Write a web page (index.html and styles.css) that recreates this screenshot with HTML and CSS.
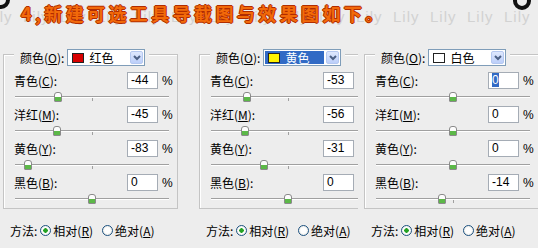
FILE: index.html
```html
<!DOCTYPE html>
<html lang="zh-CN">
<head>
    <meta charset="UTF-8">
    <title>可选颜色</title>
    <link rel="stylesheet" href="styles.css">
</head>
<body>

    <div class="banner">
        <div class="watermark">
            <span>Lily</span><span>Lily</span><span>Lily</span><span>Lily</span><span>Lily</span><span>Lily</span><span>Lily</span><span>Lily</span><span>Lily</span><span>Lily</span><span>Lily</span><span>Lily</span><span>Lily</span><span>Lily</span><span>Lily</span><span>Lily</span>
        </div>
        <h1 class="title">4,新建可选工具导截图与效果图如下。</h1>
        <span class="ring ring-left"></span>
        <span class="ring ring-right"></span>
    </div>

    <div class="panels">

        <!-- 红色 -->
        <div class="panel panel-first">
            <div class="group">
                <div class="legend">
                    <span class="label">颜色(<u>O</u>):</span>
                    <div class="select">
                        <span class="select-value"><span class="swatch swatch-red"></span>红色</span>
                        <span class="select-btn"><svg width="8" height="6" viewBox="0 0 8 6"><path d="M1 1 L4 4 L7 1" fill="none" stroke="#4d6185" stroke-width="2"/></svg></span>
                    </div>
                </div>
                <div class="row"><span class="label">青色(<u>C</u>):</span><span class="field">-44</span><span class="pct">%</span></div>
                <div class="slider"><span class="track"></span><span class="tick"></span><span class="thumb" style="left: 28%"></span></div>
                <div class="row"><span class="label">洋红(<u>M</u>):</span><span class="field">-45</span><span class="pct">%</span></div>
                <div class="slider"><span class="track"></span><span class="tick"></span><span class="thumb" style="left: 27.5%"></span></div>
                <div class="row"><span class="label">黄色(<u>Y</u>):</span><span class="field">-83</span><span class="pct">%</span></div>
                <div class="slider"><span class="track"></span><span class="tick"></span><span class="thumb" style="left: 8.5%"></span></div>
                <div class="row"><span class="label">黑色(<u>B</u>):</span><span class="field">0</span><span class="pct">%</span></div>
                <div class="slider"><span class="track"></span><span class="tick"></span><span class="thumb" style="left: 50%"></span></div>
            </div>
            <div class="method">
                <span>方法:</span>
                <span class="radio checked"></span><span>相对(<u>R</u>)</span>
                <span class="radio radio-gap"></span><span>绝对(<u>A</u>)</span>
            </div>
        </div>

        <!-- 黄色 -->
        <div class="panel panel-second">
            <div class="group">
                <div class="legend">
                    <span class="label">颜色(<u>O</u>):</span>
                    <div class="select">
                        <span class="select-value selected"><span class="swatch swatch-yellow"></span>黄色</span>
                        <span class="select-btn"><svg width="8" height="6" viewBox="0 0 8 6"><path d="M1 1 L4 4 L7 1" fill="none" stroke="#4d6185" stroke-width="2"/></svg></span>
                    </div>
                </div>
                <div class="row"><span class="label">青色(<u>C</u>):</span><span class="field">-53</span><span class="pct">%</span></div>
                <div class="slider"><span class="track"></span><span class="tick"></span><span class="thumb" style="left: 23.5%"></span></div>
                <div class="row"><span class="label">洋红(<u>M</u>):</span><span class="field">-56</span><span class="pct">%</span></div>
                <div class="slider"><span class="track"></span><span class="tick"></span><span class="thumb" style="left: 22%"></span></div>
                <div class="row"><span class="label">黄色(<u>Y</u>):</span><span class="field">-31</span><span class="pct">%</span></div>
                <div class="slider"><span class="track"></span><span class="tick"></span><span class="thumb" style="left: 34.5%"></span></div>
                <div class="row"><span class="label">黑色(<u>B</u>):</span><span class="field">0</span><span class="pct">%</span></div>
                <div class="slider"><span class="track"></span><span class="tick"></span><span class="thumb" style="left: 50%"></span></div>
            </div>
            <div class="method">
                <span>方法:</span>
                <span class="radio checked"></span><span>相对(<u>R</u>)</span>
                <span class="radio radio-gap"></span><span>绝对(<u>A</u>)</span>
            </div>
        </div>

        <!-- 白色 -->
        <div class="panel panel-third">
            <div class="group">
                <div class="legend">
                    <span class="label">颜色(<u>O</u>):</span>
                    <div class="select">
                        <span class="select-value"><span class="swatch swatch-white"></span>白色</span>
                        <span class="select-btn"><svg width="8" height="6" viewBox="0 0 8 6"><path d="M1 1 L4 4 L7 1" fill="none" stroke="#4d6185" stroke-width="2"/></svg></span>
                    </div>
                </div>
                <div class="row"><span class="label">青色(<u>C</u>):</span><span class="field"><span class="text-selected">0</span></span><span class="pct">%</span></div>
                <div class="slider"><span class="track"></span><span class="tick"></span><span class="thumb" style="left: 50%"></span></div>
                <div class="row"><span class="label">洋红(<u>M</u>):</span><span class="field">0</span><span class="pct">%</span></div>
                <div class="slider"><span class="track"></span><span class="tick"></span><span class="thumb" style="left: 50%"></span></div>
                <div class="row"><span class="label">黄色(<u>Y</u>):</span><span class="field">0</span><span class="pct">%</span></div>
                <div class="slider"><span class="track"></span><span class="tick"></span><span class="thumb" style="left: 50%"></span></div>
                <div class="row"><span class="label">黑色(<u>B</u>):</span><span class="field">-14</span><span class="pct">%</span></div>
                <div class="slider"><span class="track"></span><span class="tick"></span><span class="thumb" style="left: 43%"></span></div>
            </div>
            <div class="method">
                <span>方法:</span>
                <span class="radio checked"></span><span>相对(<u>R</u>)</span>
                <span class="radio radio-gap"></span><span>绝对(<u>A</u>)</span>
            </div>
        </div>

    </div>

</body>
</html>
```

FILE: styles.css
```css
/* Global styles */
body {
    margin: 0;
    width: 538px;
    height: 248px;
    overflow: hidden;
    background-color: #ededed;
    font-family: "Noto Sans CJK SC", sans-serif;
    font-size: 12px;
    color: #000;
}

u {
    text-decoration: underline;
    text-underline-offset: 1px;
}

/* Banner */
.banner {
    position: relative;
    height: 49px;
    overflow: hidden;
}

.watermark {
    position: absolute;
    top: 8px;
    left: -14px;
    display: flex;
    font-family: "Liberation Sans", sans-serif;
    font-size: 15px;
    letter-spacing: 1px;
    color: #d2d2d2;
    white-space: nowrap;
}

.watermark span {
    width: 37px;
    flex: none;
}

.title {
    position: relative;
    margin: 0;
    padding: 3px 0 0 21px;
    font-size: 18px;
    line-height: 20px;
    font-weight: bold;
    letter-spacing: 3.4px;
    color: #f26a0a;
    text-shadow: 1px 0 0 #b02c00, -1px 0 0 #b02c00, 0 1px 0 #b02c00, 0 -1px 0 #b02c00;
}

.ring {
    position: absolute;
    width: 10px;
    height: 10px;
    border: 4px solid #111;
    border-radius: 50%;
}

.ring-left {
    top: -9px;
    left: -8px;
}

.ring-right {
    top: -8px;
    left: 513px;
}

/* Panels */
.panels {
    display: flex;
}

.panel {
    flex: none;
    overflow: hidden;
    height: 199px;
    box-sizing: border-box;
}

.panel-first {
    width: 180px;
    padding-left: 3px;
}

.panel-second {
    width: 178px;
    padding-left: 19px;
}

.panel-third {
    width: 180px;
    padding-left: 6px;
}

.group {
    width: 175px;
    margin-top: 5px;
    border: 1px solid #c4c4c4;
    box-shadow: inset 1px 1px 0 #fff;
    box-sizing: border-box;
}

.panel-third .group {
    width: 182px;
}

.legend {
    display: flex;
    align-items: center;
    gap: 3px;
    width: max-content;
    height: 17px;
    margin: -6px 0 0 10px;
    padding: 0 4px 0 6px;
    background-color: #ededed;
}

.select {
    display: flex;
    align-items: center;
    width: 78px;
    height: 17px;
    padding: 1px;
    border: 1px solid #7f9db9;
    background-color: #fff;
    box-sizing: border-box;
}

.select-value {
    flex: 1;
    display: flex;
    align-items: center;
    gap: 5px;
    height: 13px;
    padding-left: 3px;
    margin-right: 2px;
    line-height: 13px;
}

.select-value.selected {
    background-color: #316ac5;
    color: #fff;
}

.swatch {
    width: 12px;
    height: 10px;
    border: 1px solid #222;
    box-sizing: border-box;
}

.swatch-red {
    background-color: #d80000;
}

.swatch-yellow {
    background-color: #fff200;
}

.swatch-white {
    background-color: #fff;
}

.select-btn {
    display: flex;
    align-items: center;
    justify-content: center;
    width: 13px;
    height: 13px;
    border: 1px solid #b5c8f0;
    border-radius: 2px;
    background: linear-gradient(#dfe8fd, #bccffa);
    box-sizing: border-box;
}

/* Rows */
.row {
    display: flex;
    align-items: center;
    height: 17px;
    margin-top: 6px;
    padding-left: 10px;
}

.slider + .row {
    margin-top: 0;
}

.row .label {
    width: 113px;
    flex: none;
}

.field {
    width: 31px;
    height: 17px;
    padding-left: 3px;
    border: 1px solid #a5acb5;
    background-color: #fff;
    box-sizing: border-box;
    font-family: "Liberation Sans", sans-serif;
    font-size: 12px;
    line-height: 15px;
}

.text-selected {
    background-color: #316ac5;
    color: #fff;
}

.pct {
    margin-left: 4px;
    font-family: "Liberation Sans", sans-serif;
}

/* Sliders */
.slider {
    position: relative;
    width: 154px;
    height: 17px;
    margin-left: 11px;
}

.track {
    position: absolute;
    left: 0;
    right: 0;
    top: 7px;
    height: 1px;
    background-color: #a0a0a0;
    border-bottom: 1px solid #fff;
}

.tick {
    position: absolute;
    left: 50%;
    top: 9px;
    width: 1px;
    height: 3px;
    background-color: #a0a0a0;
}

.thumb {
    position: absolute;
    top: 3px;
    width: 8px;
    height: 10px;
    margin-left: -4px;
    border: 1px solid #8a8a8a;
    border-radius: 3px 3px 1px 1px;
    background: linear-gradient(#fdfdfd 55%, #5cb848 56%);
    box-sizing: border-box;
}

/* Method */
.method {
    display: flex;
    align-items: center;
    height: 16px;
    margin-top: 13px;
    padding-left: 7px;
}

.radio {
    width: 11px;
    height: 11px;
    margin: 0 2px 0 3px;
    border: 1px solid #1c5180;
    border-radius: 50%;
    background: radial-gradient(circle, #fff 40%, #dcdcd4);
    box-sizing: border-box;
}

.radio.checked {
    background: radial-gradient(circle, #24a224 2px, #fff 2.5px, #e6e6e0);
}

.radio-gap {
    margin-left: 9px;
}
```
